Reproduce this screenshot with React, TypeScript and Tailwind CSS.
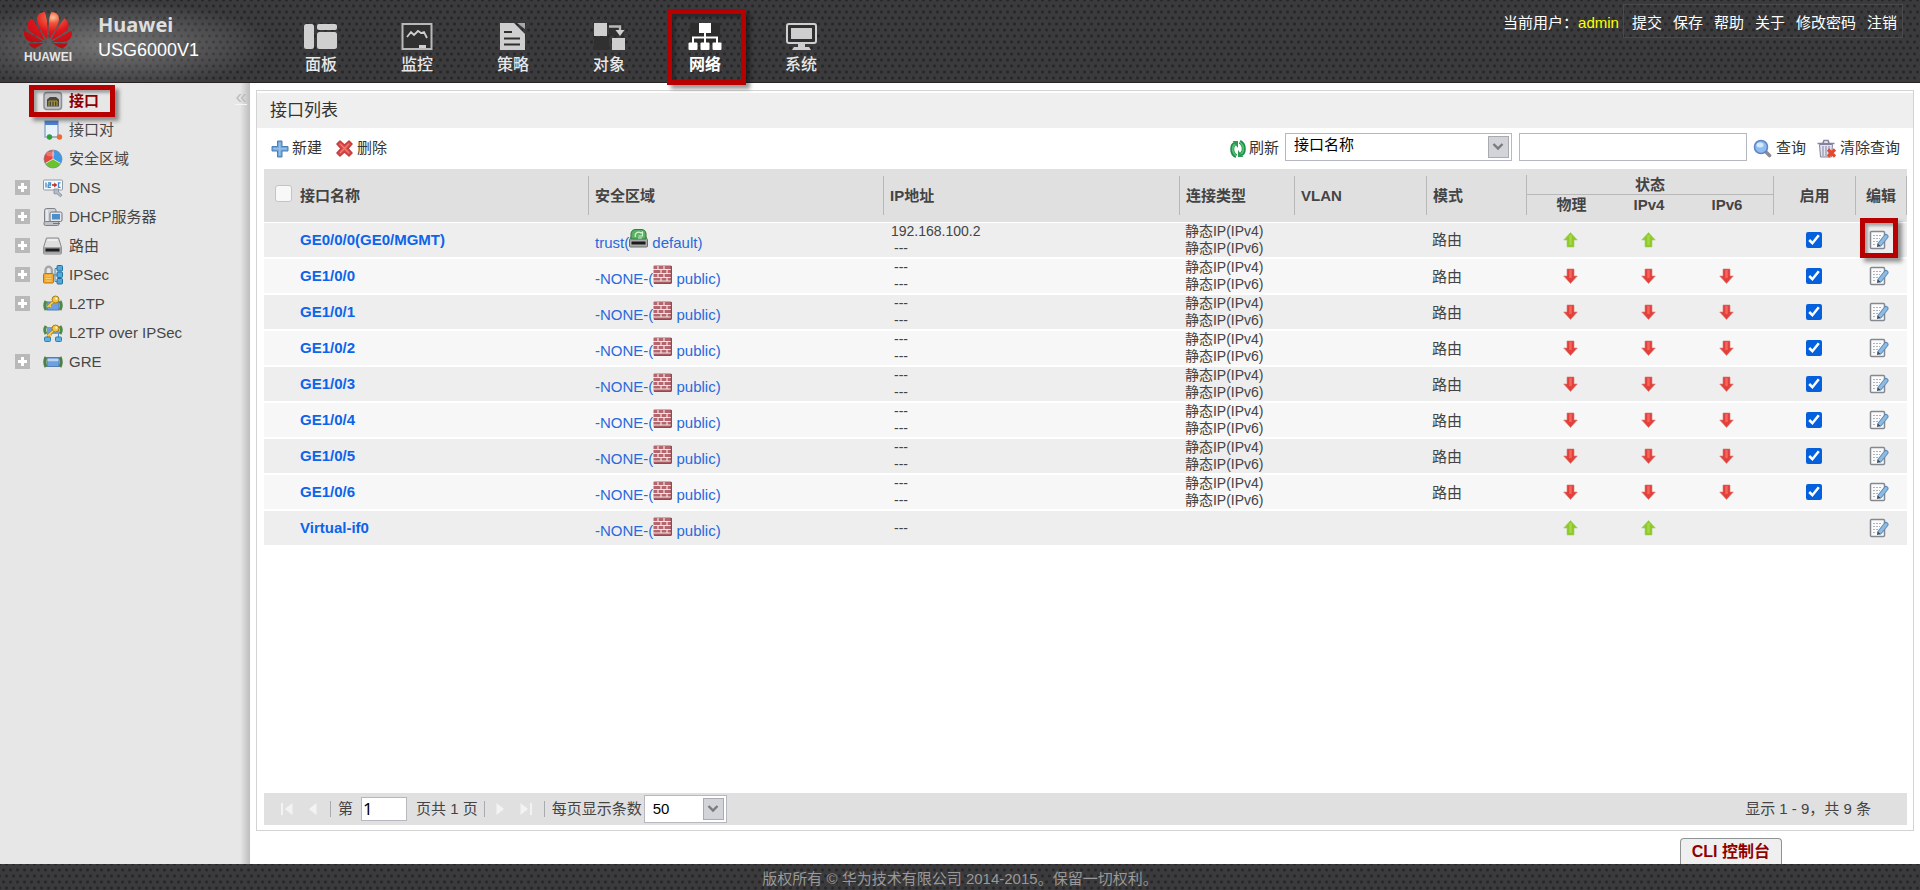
import { useState } from 'react'
import type { ReactNode } from 'react'
import { SiHuawei } from 'react-icons/si'
import clsx from 'clsx'

interface NavItem {
  label: string;
  icon: ReactNode;
  active?: boolean;
}

interface MenuItem {
  label: string;
  icon: ReactNode;
  expandable?: boolean;
  active?: boolean;
}

type LinkState = 'up' | 'down' | null

interface Interface {
  name: string;
  zone: string;
  vsys: string;
  root?: boolean;
  ip: string[];
  types: string[];
  vlan: string;
  mode: string;
  states: LinkState[];
  enabled: boolean | null;
}

/* ---------- Top navigation icons ---------- */

const PanelIcon = () => (
  <svg width="34" height="27" viewBox="0 0 34 27" fill="#cfcfcf" aria-hidden="true">
    <rect x="0" y="1" width="10" height="25" rx="2.5" />
    <rect x="13" y="1" width="20" height="6" rx="2" />
    <rect x="13" y="9" width="20" height="17" rx="2.5" />
  </svg>
)

const MonitorIcon = () => (
  <svg width="34" height="27" viewBox="0 0 34 27" fill="none" aria-hidden="true">
    <rect x="2.5" y="1" width="29" height="25" fill="#303031" stroke="#b9b9b9" strokeWidth="2" />
    <path d="M7 14 L11 9 L14 12 L18 8 L21 10 L24 9 L27 15" stroke="#cfcfcf" strokeWidth="1.8" />
    <path d="M19 25 V22 H26 V25Z" fill="#cfcfcf" />
  </svg>
)

const PolicyIcon = () => (
  <svg width="34" height="27" viewBox="0 0 34 27" aria-hidden="true">
    <path d="M4 0 H18 L29 11 V27 H4Z" fill="#cfcfcf" />
    <path d="M21 0 H29 V6Z" fill="#a9a9a9" />
    <path d="M8 9 H16 M8 15.5 H24 M8 21.5 H24" stroke="#2f2f30" strokeWidth="2" />
  </svg>
)

const ObjectIcon = () => (
  <svg width="34" height="27" viewBox="0 0 34 27" aria-hidden="true">
    <rect x="17" width="15" height="13" fill="#303031" />
    <rect x="2" y="14" width="15" height="13" fill="#303031" />
    <rect x="2" y="0" width="13" height="13" fill="#cfcfcf" />
    <rect x="20" y="15" width="13" height="12" fill="#cfcfcf" />
    <path d="M17 3.5 H28 V8" stroke="#b9b9b9" strokeWidth="2.4" fill="none" />
    <path d="M23.5 7 H32.5 L28 13Z" fill="#cfcfcf" />
  </svg>
)

const NetworkIcon = () => (
  <svg width="34" height="27" viewBox="0 0 34 27" aria-hidden="true">
    <rect x="2" width="30" height="22" fill="#2c2c2d" />
    <path d="M17 9 V20 M5 21 V14.5 H29 V21" stroke="#ffffff" strokeWidth="2" fill="none" />
    <g fill="#ffffff">
      <rect x="11" y="0" width="12" height="10" />
      <rect x="0.5" y="19.5" width="9" height="7.5" rx="1" />
      <rect x="12.5" y="19.5" width="9" height="7.5" rx="1" />
      <rect x="24.5" y="19.5" width="9" height="7.5" rx="1" />
    </g>
  </svg>
)

const SystemIcon = () => (
  <svg width="34" height="27" viewBox="0 0 34 27" aria-hidden="true">
    <rect x="3" y="1" width="29" height="19" rx="2" fill="#303031" stroke="#cfcfcf" strokeWidth="2" />
    <rect x="7" y="5" width="21" height="11" fill="#cfcfcf" />
    <path d="M14 20 H21 V24 H25 L27 27 H8 L10 24 H14Z" fill="#cfcfcf" />
  </svg>
)

/* ---------- Side menu icons ---------- */

const PortIcon = () => (
  <svg width="20" height="20" viewBox="0 0 20 20" aria-hidden="true">
    <rect x="1" y="1.5" width="17.5" height="17" rx="3" fill="#c4c4c8" stroke="#8d8e93" strokeWidth="1.5" />
    <path d="M4 15.5 V8.5 L7 6 H13 L16 8.5 V15.5Z" fill="#4a463a" />
    <path d="M6 15 V10 M8.7 15 V10 M11.3 15 V10 M14 15 V10 M6 10 H14" stroke="#a69a35" strokeWidth="1.2" />
  </svg>
)

const PortPairIcon = () => (
  <svg width="20" height="20" viewBox="0 0 20 20" aria-hidden="true">
    <rect x="2" y="1" width="13" height="16" fill="#eaf1fa" stroke="#8aa6cc" strokeWidth="1.4" />
    <rect x="2" y="1" width="13" height="4" fill="#4f83d1" />
    <path d="M6 17 H16" stroke="#9aa" strokeWidth="1" />
    <circle cx="6.5" cy="17" r="2.7" fill="#2ba23a" />
    <circle cx="16.5" cy="17" r="2.7" fill="#ef6a30" />
  </svg>
)

const ZoneIcon = () => (
  <svg width="20" height="20" viewBox="0 0 20 20" aria-hidden="true">
    <path d="M10 10 L10 1 A9 9 0 0 0 2.2 14.5Z" fill="#e5473f" />
    <path d="M10 10 L10 1 A9 9 0 0 1 17.8 14.5Z" fill="#3e9ae6" />
    <path d="M10 10 L2.2 14.5 A9 9 0 0 0 17.8 14.5Z" fill="#6cc22e" />
    <path d="M10 1 V10 L17.8 14.5 M10 10 L2.2 14.5" stroke="#f4f4f4" strokeWidth="0.7" fill="none" />
    <circle cx="10" cy="10" r="9" fill="none" stroke="#7d8790" strokeWidth="0.7" />
    <ellipse cx="7.5" cy="5" rx="4" ry="2.5" fill="#fff" opacity="0.25" />
  </svg>
)

const DnsIcon = () => (
  <svg width="20" height="20" viewBox="0 0 20 20" aria-hidden="true">
    <rect x="0.5" y="2" width="19" height="10" rx="1" fill="#f6f8fb" stroke="#8f9aa8" />
    <path d="M3 4.5 V9.5 M5 5 H7.5 V7 H5.2 V9.3 H8 M17.5 4.8 H15.5 V9.3 H17.5" stroke="#3a8fd0" strokeWidth="1.3" fill="none" />
    <path d="M9 7 H12" stroke="#c62a2a" strokeWidth="1.6" />
    <path d="M11.2 4.5 L14.3 7 L11.2 9.5Z" fill="#c62a2a" />
    <path d="M11 11 h4.5 v3 l3.5 3 -1.5 1.8 -3.5 -3 h-3z" fill="#b3bac8" stroke="#808aa0" strokeWidth="0.8" />
  </svg>
)

const DhcpIcon = () => (
  <svg width="20" height="20" viewBox="0 0 20 20" aria-hidden="true">
    <path d="M1.5 3.5 Q1.500 1.500 3.500 1.500 H11 Q13 1.500 13 3.500 V15 H1.500Z" fill="#d0d2d6" stroke="#7d8188" />
    <path d="M4 3 V14" stroke="#f2f2f2" strokeWidth="1.5" />
    <rect x="1" y="14.5" width="15" height="4" rx="1.5" fill="#bfc2c7" stroke="#7d8188" />
    <rect x="7" y="5" width="12" height="9.5" rx="1.5" fill="#e4e6e8" stroke="#71767d" />
    <rect x="9" y="7" width="8" height="5.5" fill="#4d8fcc" />
    <path d="M10 16.5 H17" stroke="#777" />
  </svg>
)

const RouteIcon = () => (
  <svg width="20" height="20" viewBox="0 0 20 20" aria-hidden="true">
    <path d="M3.5 2 H15.5 L18.5 11.5 V17 Q18.5 18 17.5 18 H1.500 Q0.5 18 0.5 17 V11.5Z" fill="#dededf" stroke="#85868a" />
    <path d="M0.5 11 H18.5 V17.5 H0.5Z" fill="#a3a3a6" />
    <rect x="2.5" y="12.5" width="14" height="3" fill="#1f1f1f" />
    <path d="M4.5 4 H14.5" stroke="#fff" />
  </svg>
)

const IpsecIcon = () => (
  <svg width="20" height="20" viewBox="0 0 20 20" aria-hidden="true">
    <path d="M2.5 9 V5 A3.2 3.2 0 0 1 8.9 5 V9" fill="none" stroke="#a4a6aa" strokeWidth="2.4" />
    <rect x="0.5" y="8.5" width="10" height="9.5" rx="1" fill="#f1a52c" stroke="#b97616" />
    <path d="M2.5 11 H8.5 M2.5 13.5 H8.5 M2.5 16 H8.5" stroke="#fbd27a" />
    <path d="M10.5 10 H14 M12 3.5 H14 M12 16.5 H14 M12 3.5 V16.5" stroke="#4a86ab" fill="none" />
    <g fill="#55a8dc" stroke="#22719f">
      <rect x="14" y="0.5" width="5.5" height="5.5" rx="1" />
      <rect x="14" y="7" width="5.5" height="5.5" rx="1" />
      <rect x="14" y="13.5" width="5.5" height="5.5" rx="1" />
    </g>
  </svg>
)

const KeyShape = () => (
  <g>
    <circle cx="12.5" cy="5.500" r="3.5" fill="#f2c443" stroke="#a97c10" />
    <circle cx="13.3" cy="4.700" r="1.1" fill="#fff8d8" />
    <path d="M10 8 L4.5 13 M6.500 11.5 L8 13" stroke="#b88914" strokeWidth="3" />
    <path d="M10 8 L4.5 13 M6.500 11.5 L8 13" stroke="#f6d257" strokeWidth="1.6" />
  </g>
)

const L2tpIcon = () => (
  <svg width="20" height="20" viewBox="0 0 20 20" aria-hidden="true">
    <rect x="4" y="8" width="12" height="8" fill="#6f9fdc" stroke="#4f7fb5" />
    <path d="M3 7 Q0.500 11.500 3 16 M17 7 Q19.500 11.500 17 16" fill="none" stroke="#4d8a47" strokeWidth="3" />
    <KeyShape />
  </svg>
)

const L2tpIpsecIcon = () => (
  <svg width="20" height="20" viewBox="0 0 20 20" aria-hidden="true">
    <rect x="4" y="4" width="12" height="7" fill="#6f9fdc" />
    <path d="M3 3 Q0.500 7 3 11 M17 3 Q19.500 7 17 11" fill="none" stroke="#4d8a47" strokeWidth="3" />
    <path d="M4.5 11 V14 M15.5 11 V14" stroke="#4a86ab" />
    <rect x="1.5" y="14" width="6" height="4.5" rx="1" fill="#62b1e2" stroke="#2c7fae" />
    <rect x="12.5" y="14" width="6" height="4.5" rx="1" fill="#62b1e2" stroke="#2c7fae" />
    <KeyShape />
  </svg>
)

const GreIcon = () => (
  <svg width="20" height="20" viewBox="0 0 20 20" aria-hidden="true">
    <rect x="4" y="5.5" width="12" height="9" fill="#6f9fdc" stroke="#4f7fb5" />
    <path d="M4.5 8 H15.5" stroke="#b9d5f3" strokeWidth="2.5" />
    <path d="M3 5 Q0.500 10 3 15 M17 5 Q19.500 10 17 15" fill="none" stroke="#4d7f47" strokeWidth="3" />
  </svg>
)

const ExpandIcon = () => (
  <svg width="15" height="15" viewBox="0 0 15 15" aria-hidden="true">
    <rect width="15" height="15" fill="#b9b9b9" />
    <path d="M7.5 3 V12 M3 7.5 H12" stroke="#ffffff" strokeWidth="3" />
  </svg>
)

/* ---------- Toolbar and table icons ---------- */

const AddIcon = () => (
  <svg width="18" height="18" viewBox="0 0 18 18" aria-hidden="true">
    <path d="M6.5 1 H11 V6.5 H17 V11 H11 V17 H6.5 V11 H1 V6.5 H6.5Z" fill="#6fa6d8" stroke="#4a7fb8" />
    <path d="M8.7 2.5 V15.5 M2.5 8.7 H15.5" stroke="#96c0ea" strokeWidth="1.6" />
  </svg>
)

const DeleteIcon = () => (
  <svg width="17" height="17" viewBox="0 0 17 17" aria-hidden="true">
    <path d="M4 1 L8.5 5 L13 1 L16 4 L12 8.5 L16 13 L13 16 L8.5 12 L4 16 L1 13 L5 8.5 L1 4Z" fill="#de4a4a" stroke="#c04040" strokeLinejoin="round" strokeWidth="1.5" />
    <path d="M4 3.8 L13 13 M13 3.8 L4 13" stroke="#ee7a72" strokeWidth="1.3" />
  </svg>
)

const RefreshIcon = () => (
  <svg width="16" height="18" viewBox="0 0 18 20" aria-hidden="true">
    <path d="M7 18 Q2.500 16 2.500 10 Q2.500 5 6 4 M11 2 Q15.500 4 15.500 10 Q15.500 15 12 16" fill="none" stroke="#1f8a45" strokeWidth="4.5" />
    <path d="M7 17.5 Q3 15 3 10 Q3 5.500 6 4.5 M11 2.500 Q15 5 15 10 Q15 14.500 12 15.500" fill="none" stroke="#4fc078" strokeWidth="2" />
    <path d="M3 1 H9 V9Z M15 19 H9 V11Z" fill="#2d9a52" />
  </svg>
)

const SearchIcon = () => (
  <svg width="19" height="19" viewBox="0 0 19 19" aria-hidden="true">
    <path d="M12.5 12.5 L16.5 16.5" stroke="#8b8b92" strokeWidth="3.6" strokeLinecap="round" />
    <circle cx="8" cy="8" r="6.5" fill="#8fbdf0" stroke="#6385c8" strokeWidth="1.6" />
    <ellipse cx="7" cy="6" rx="3.5" ry="2.5" fill="#d6e9fc" />
  </svg>
)

const ClearIcon = () => (
  <svg width="19" height="19" viewBox="0 0 19 19" aria-hidden="true">
    <path d="M2.5 5.5 H15.5 L14.5 18 H3.5Z" fill="#e2e2f0" stroke="#83839f" />
    <path d="M6 7 V17 M9 7 V17 M12 7 V17" stroke="#9a9ab5" strokeWidth="1.3" />
    <path d="M0.5 4.5 H17.5 M6 4 L7 1.5 H11 L12 4" stroke="#83839f" strokeWidth="1.6" fill="none" />
    <path d="M11 10.5 L18 17.5 M18 10.5 L11 17.5" stroke="#e5482c" strokeWidth="3.2" />
  </svg>
)

const ArrowIcon = ({ state }: { state: 'up' | 'down' }) =>
  state === 'up' ? (
    <svg className="mx-auto" width="15" height="16" viewBox="0 0 15 16" role="img" aria-label="up">
      <path d="M7.5 0.5 L14.3 8 H11 V15 H4 V8 H0.7Z" fill="#8fc82c" stroke="#a5cf6a" strokeWidth="0.6" />
      <path d="M7.5 3 V13" stroke="#a4d943" strokeWidth="2.5" />
    </svg>
  ) : (
    <svg className="mx-auto" width="15" height="16" viewBox="0 0 15 16" role="img" aria-label="down">
      <path d="M4 1 H11 V8 H14.3 L7.5 15.5 L0.7 8 H4Z" fill="#e2403a" stroke="#d87c78" strokeWidth="0.6" />
      <path d="M7.5 2 V10" stroke="#f5675c" strokeWidth="2.5" />
    </svg>
  )

const EditIcon = () => (
  <svg width="20" height="20" viewBox="0 0 20 20" aria-hidden="true">
    <rect x="1.5" y="1.5" width="14" height="17" rx="1" fill="#fbfbfc" stroke="#85898f" strokeWidth="1.5" />
    <path d="M4 5.5 H12 M4 8.5 H11 M4 11.5 H9 M4 14.5 H7" stroke="#a9b4c2" strokeDasharray="2 1" />
    <path d="M11 14 L17 6.5" stroke="#5c8cba" strokeWidth="5" strokeLinecap="round" />
    <path d="M11 14 L17 6.5" stroke="#8fbbe2" strokeWidth="3" strokeLinecap="round" />
    <path d="M8 17 L8.5 13.5 L11.5 16Z" fill="#3d4650" />
  </svg>
)

const FirewallIcon = () => (
  <svg className="inline-block -translate-y-1.5" width="19" height="19" viewBox="0 0 19 19" aria-hidden="true">
    <rect x="0.5" y="0.5" width="18" height="18" rx="1" fill="#b4656d" />
    <path d="M0 4.5 H18 M0 8.5 H18 M0 12.5 H18 M0 16 H18" stroke="#f7e4e4" strokeWidth="1.2" />
    <path d="M5 1 V4 M11 1 V4 M8 5 V8 M14 5 V8 M5 9 V12 M11 9 V12 M8 13 V16 M14 13 V16" stroke="#f7e4e4" strokeWidth="1.2" />
    <path d="M18.3 1 V18.3 H1" stroke="#75393f" fill="none" />
  </svg>
)

const RootSystemIcon = () => (
  <svg className="inline-block -translate-y-1.5" width="19" height="19" viewBox="0 0 19 19" aria-hidden="true">
    <path d="M3 6 H16 L18.5 11 V17 Q18.5 18 17.5 18 H1.5 Q0.5 18 0.5 17 V11Z" fill="#a9aaab" stroke="#6b6c6e" />
    <path d="M2 10 V4 Q3 0.500 6 0.500 H13 Q16 0.500 17 4 V10Z" fill="#5bb065" stroke="#2f7f3d" />
    <path d="M6.5 8 A3.5 3.5 0 0 1 12 4 L13.5 3 V7 H9.5 M9 9 H13" stroke="#d3f3d0" strokeWidth="1.2" fill="none" />
    <rect x="2.5" y="12.5" width="14" height="3" fill="#1c1c1c" />
  </svg>
)

const PageArrow = ({ end, flip }: { end?: boolean; flip?: boolean }) => (
  <svg className={clsx(flip && 'rotate-180')} width="16" height="16" viewBox="0 0 16 16" fill="#f3f3f3" aria-hidden="true">
    <path d="M12.5 2 V14 L5 8Z" />
    {end && <rect x="1" y="2" width="2" height="12" />}
  </svg>
)

/* ---------- Data ---------- */

const navItems: NavItem[] = [
  { label: '面板', icon: <PanelIcon /> },
  { label: '监控', icon: <MonitorIcon /> },
  { label: '策略', icon: <PolicyIcon /> },
  { label: '对象', icon: <ObjectIcon /> },
  { label: '网络', icon: <NetworkIcon />, active: true },
  { label: '系统', icon: <SystemIcon /> },
]

const menuItems: MenuItem[] = [
  { label: '接口', icon: <PortIcon />, active: true },
  { label: '接口对', icon: <PortPairIcon /> },
  { label: '安全区域', icon: <ZoneIcon /> },
  { label: 'DNS', icon: <DnsIcon />, expandable: true },
  { label: 'DHCP服务器', icon: <DhcpIcon />, expandable: true },
  { label: '路由', icon: <RouteIcon />, expandable: true },
  { label: 'IPSec', icon: <IpsecIcon />, expandable: true },
  { label: 'L2TP', icon: <L2tpIcon />, expandable: true },
  { label: 'L2TP over IPSec', icon: <L2tpIpsecIcon /> },
  { label: 'GRE', icon: <GreIcon />, expandable: true },
]

const userLinks = ['提交', '保存', '帮助', '关于', '修改密码', '注销']

const staticTypes = ['静态IP(IPv4)', '静态IP(IPv6)']

const interfaces: Interface[] = [
  {
    name: 'GE0/0/0(GE0/MGMT)',
    zone: 'trust',
    vsys: 'default',
    root: true,
    ip: ['192.168.100.2', '---'],
    types: staticTypes,
    vlan: '',
    mode: '路由',
    states: ['up', 'up', null],
    enabled: true,
  },
  ...[0, 1, 2, 3, 4, 5, 6].map((n): Interface => ({
    name: `GE1/0/${n}`,
    zone: '-NONE-',
    vsys: 'public',
    ip: ['---', '---'],
    types: staticTypes,
    vlan: '',
    mode: '路由',
    states: ['down', 'down', 'down'],
    enabled: true,
  })),
  {
    name: 'Virtual-if0',
    zone: '-NONE-',
    vsys: 'public',
    ip: ['---'],
    types: [],
    vlan: '',
    mode: '',
    states: ['up', 'up', null],
    enabled: null,
  },
]

const meshClass =
  'bg-[#3b3b3d] bg-[radial-gradient(circle,#272728_1px,transparent_2px),radial-gradient(circle,#272728_1px,transparent_2px)] bg-[length:7px_12px] bg-[position:0_0,3px_6px]'

// Red frame drawn over the item that needs attention
const Marker = ({ className }: { className: string }) => (
  <span className={clsx('pointer-events-none absolute z-10 border-[5px] border-[#b90000] shadow-[4px_4px_4px_rgba(0,0,0,0.4),inset_3px_3px_3px_rgba(0,0,0,0.3)]', className)} />
)

const SelectArrow = () => (
  <span className="pointer-events-none absolute top-[3px] right-[3px] bottom-[3px] flex w-[21px] items-center justify-center border border-[#a9abb0] bg-[#d3d4d9]">
    <svg width="12" height="8" viewBox="0 0 12 8" aria-hidden="true">
      <path d="M1.5 1 L6 5.5 L10.5 1" fill="none" stroke="#7b7b7b" strokeWidth="2.4" />
    </svg>
  </span>
)

/* ---------- Sections ---------- */

const Header = () => (
  <header className={clsx('relative flex h-[83px] shrink-0 border-b border-[#2a2324]', meshClass)}>
    <div className="flex w-[273px] shrink-0 bg-[radial-gradient(ellipse_at_40%_55%,rgba(165,165,165,0.55),transparent_70%)] pl-6">
      <svg width="0" height="0" className="absolute" aria-hidden="true">
        <defs>
          <radialGradient id="petal" cx="0.6" cy="0.15" r="0.8">
            <stop offset="0" stopColor="#ffc9a0" />
            <stop offset="0.2" stopColor="#f0553a" />
            <stop offset="0.5" stopColor="#e0141c" />
            <stop offset="1" stopColor="#b80d14" />
          </radialGradient>
        </defs>
      </svg>
      <div className="flex w-12 flex-col items-center pt-[6px]">
        <SiHuawei size={48} fill="url(#petal)" />
        <span className="-mt-1 text-[12px] leading-[14px] font-bold text-[#e6e6e6]">HUAWEI</span>
      </div>
      <div className="ml-[26px] pt-3">
        <div className="font-['Noto_Sans'] text-[20px] leading-[26px] font-bold text-[#dedede]">Huawei</div>
        <div className="text-[18px] leading-6 text-white">USG6000V1</div>
      </div>
    </div>
    <nav className="flex">
      {navItems.map((item) => (
        <a key={item.label} href="#" className="relative flex w-24 flex-col items-center pt-[23px] text-[16px] leading-[30px] text-[#e8e8e8]">
          {item.icon}
          <span className={item.active ? 'font-bold text-white' : 'font-medium'}>{item.label}</span>
          {item.active && <Marker className="top-[9px] left-[10px] h-[76px] w-[79px]" />}
        </a>
      ))}
    </nav>
    <div className="mt-1 mr-[17px] ml-auto flex h-[34px] items-center text-[15px] text-white">
      <span className="pt-[5px]">当前用户：</span>
      <span className="pt-[5px] text-[#ffff00]">admin</span>
      <div className="ml-1 flex h-full items-center gap-[11px] border border-[#4a4a4c] pt-[5px] pr-[5px] pl-2">
        {userLinks.map((label) => (
          <a key={label} href="#">{label}</a>
        ))}
      </div>
    </div>
  </header>
)

const Sidebar = () => (
  <aside className="relative w-[250px] shrink-0 bg-[linear-gradient(to_right,#e7e7e7_96%,#bdbdbd)] pt-[3px]">
    <button aria-label="收起" className="absolute top-1 right-[3px] h-[18px] w-3 border-b border-[#f6f6f6] text-[20px] leading-3 text-[#bdbdbd]">«</button>
    <ul>
      {menuItems.map((item) => (
        <li key={item.label} className="relative flex h-[29px] items-center pl-[15px]">
          <span className="w-7">
            {item.expandable && (
              <button aria-label={`展开 ${item.label}`} className="block"><ExpandIcon /></button>
            )}
          </span>
          <a href="#" className={clsx('flex items-center gap-[6px] text-[15px]', item.active ? 'font-bold text-[#8f0000]' : 'text-[#464646]')}>
            {item.icon}
            <span className="leading-5">{item.label}</span>
          </a>
          {item.active && <Marker className="-top-px left-[29px] h-8 w-[86px]" />}
        </li>
      ))}
    </ul>
  </aside>
)

const Toolbar = () => {
  const [keyword, setKeyword] = useState('')

  return (
    <div className="flex h-[41px] items-center pr-[7px] pl-[7px] text-[15px] text-[#333333]">
      <button className="flex items-center gap-[3px]"><AddIcon />新建</button>
      <button className="ml-[14px] flex items-center gap-1"><DeleteIcon />删除</button>
      <div className="ml-auto flex items-center">
        <button className="flex items-center gap-[3px]"><RefreshIcon />刷新</button>
        <div className="relative mb-[3px] ml-[6px] h-7 w-[227px]">
          <select aria-label="查询条件" className="h-full w-full appearance-none border border-[#b5b8c0] bg-white px-2 pb-1 text-[15px] text-black">
            <option>接口名称</option>
          </select>
          <SelectArrow />
        </div>
        <input
          aria-label="关键字"
          value={keyword}
          onChange={(e) => setKeyword(e.target.value)}
          className="mb-[3px] ml-[7px] h-7 w-[228px] border border-[#b5b8c0] bg-white px-2"
        />
        <button className="ml-[6px] flex items-center gap-1"><SearchIcon />查询</button>
        <button className="ml-[11px] flex items-center gap-1"><ClearIcon />清除查询</button>
      </div>
    </div>
  )
}

const HeadCell = ({ children, center }: { children: ReactNode; center?: boolean }) => (
  <div className={clsx('flex h-[39px] items-center border-l border-[#b8b8b8]', center ? 'justify-center' : 'pl-[6px]')}>{children}</div>
)

const InterfaceTable = () => (
  <table className="w-full table-fixed border-collapse text-[14px] leading-[17px] text-[#444444]">
    <colgroup>
      <col className="w-[324px]" />
      <col className="w-[295px]" />
      <col />
      <col className="w-[115px]" />
      <col className="w-[132px]" />
      <col className="w-[100px]" />
      <col className="w-[84px]" />
      <col className="w-[78px]" />
      <col className="w-[85px]" />
      <col className="w-[82px]" />
      <col className="w-[52px]" />
    </colgroup>
    <thead className="border-b border-white bg-[#e0e0e0] text-left text-[15px] leading-[19px]">
      <tr className="h-[26px]">
        <th rowSpan={2}>
          <div className="flex items-center gap-2 pl-[11px]">
            <input
              type="checkbox"
              aria-label="全选"
              className="mb-1 size-[17px] appearance-none rounded-[3px] border border-[#c4c4c4] bg-[#f8f8f8] checked:bg-[#0560dd]"
            />
            接口名称
          </div>
        </th>
        <th rowSpan={2}><HeadCell>安全区域</HeadCell></th>
        <th rowSpan={2}><HeadCell>IP地址</HeadCell></th>
        <th rowSpan={2}><HeadCell>连接类型</HeadCell></th>
        <th rowSpan={2}><HeadCell>VLAN</HeadCell></th>
        <th rowSpan={2}><HeadCell>模式</HeadCell></th>
        <th colSpan={3} className="align-bottom">
          <div className="h-5 border-b border-l border-[#b8b8b8] text-center">状态</div>
        </th>
        <th rowSpan={2}><HeadCell center>启用</HeadCell></th>
        <th rowSpan={2}><div className="border-r border-[#b8b8b8]"><HeadCell center>编辑</HeadCell></div></th>
      </tr>
      <tr className="h-[27px] text-center align-top">
        <th><div className="h-5 border-l border-[#b8b8b8] pl-[6px]">物理</div></th>
        <th>IPv4</th>
        <th className="pr-[7px]">IPv6</th>
      </tr>
    </thead>
    <tbody>
      {interfaces.map((row, i) => (
        <tr key={row.name} className={clsx('h-9 border-b-2 border-white', i % 2 ? 'bg-[#f7f7f7]' : 'bg-[#eeeeee]')}>
          <td className="pl-9">
            <a href="#" className="text-[15px] font-bold text-[#0b64ea]">{row.name}</a>
          </td>
          <td className="pt-2 pl-[7px] text-[15px] text-[#2a69dc]">
            <a href="#">{row.zone}</a>(
            {row.root ? <RootSystemIcon /> : <FirewallIcon />} {row.vsys})
          </td>
          <td className="pl-2">
            {row.ip.map((ip, n) => (
              <div key={n} className={clsx(ip === '---' && 'pl-[3px]')}>{ip}</div>
            ))}
          </td>
          <td className="pl-[6px]">
            {row.types.map((type) => <div key={type}>{type}</div>)}
          </td>
          <td className="pl-2">{row.vlan}</td>
          <td className="pl-[6px] text-[15px]">{row.mode}</td>
          {row.states.map((state, n) => (
            <td key={n} className={clsx(n === 0 && 'pl-[6px]', n === 2 && 'pr-[7px]')}>
              {state && <ArrowIcon state={state} />}
            </td>
          ))}
          <td className="text-center">
            {row.enabled !== null && (
              <input type="checkbox" defaultChecked={row.enabled} aria-label={`启用 ${row.name}`} className="mx-auto block size-4 accent-[#0560dd]" />
            )}
          </td>
          <td className="relative">
            <button aria-label={`编辑 ${row.name}`} className="mx-auto block pr-1"><EditIcon /></button>
            {i === 0 && <Marker className="-top-[5px] left-[5px] h-10 w-[38px]" />}
          </td>
        </tr>
      ))}
    </tbody>
  </table>
)

const Separator = () => <span className="h-4 w-px bg-[#a9abb0]" />

const Pagination = () => (
  <div className="mt-auto flex h-8 items-center bg-[#e0e0e0] pr-9 pl-4 text-[15px] text-[#444444]">
    <button aria-label="首页"><PageArrow end /></button>
    <button aria-label="上一页" className="mr-[10px] ml-2"><PageArrow /></button>
    <Separator />
    <label htmlFor="page" className="mr-2 ml-[7px]">第</label>
    <input id="page" defaultValue="1" className="mr-[9px] h-6 w-[46px] border border-[#b5b8c0] bg-white px-px font-['Noto_Sans'] text-[17px] text-black" />
    <span className="mr-[6px]">页共 1 页</span>
    <Separator />
    <button aria-label="下一页" className="mr-2 ml-2"><PageArrow flip /></button>
    <button aria-label="末页" className="mr-[11px]"><PageArrow end flip /></button>
    <Separator />
    <label htmlFor="page-size" className="mr-[2px] ml-[7px]">每页显示条数</label>
    <div className="relative h-7 w-[83px]">
      <select id="page-size" className="h-full w-full appearance-none border border-[#b5b8c0] bg-white px-2 text-[15px] text-black">
        <option>50</option>
      </select>
      <SelectArrow />
    </div>
    <span className="ml-auto">显示 1 - 9，共 9 条</span>
  </div>
)

export default function App() {
  return (
    <div className="flex min-h-screen flex-col bg-white font-['Liberation_Sans','Noto_Sans_CJK_SC',sans-serif]">
      <Header />
      <div className="flex grow">
        <Sidebar />
        <div className="flex min-w-0 grow flex-col pt-[7px] pr-[6px] pl-[6px]">
          <main className="flex grow flex-col border border-[#d3d3d3] pt-[2px] pb-[5px]">
            <h1 className="h-[35px] bg-[#efefef] pl-[13px] text-[17px] leading-9 text-[#333333]">接口列表</h1>
            <div className="flex grow flex-col pr-[6px] pl-[7px]">
              <Toolbar />
              <InterfaceTable />
              <Pagination />
            </div>
          </main>
          <button className="mt-[7px] mr-[132px] ml-auto h-[26px] rounded-t border border-b-0 border-[#8f9394] bg-[#efefef] px-[11px] text-[16px] leading-6 font-bold text-[#8f0000]">
            CLI 控制台
          </button>
        </div>
      </div>
      <footer className={clsx('h-[26px] shrink-0 text-center text-[15px] leading-[30px] text-[#999999]', meshClass)}>
        版权所有 © 华为技术有限公司 2014-2015。保留一切权利。
      </footer>
    </div>
  )
}
